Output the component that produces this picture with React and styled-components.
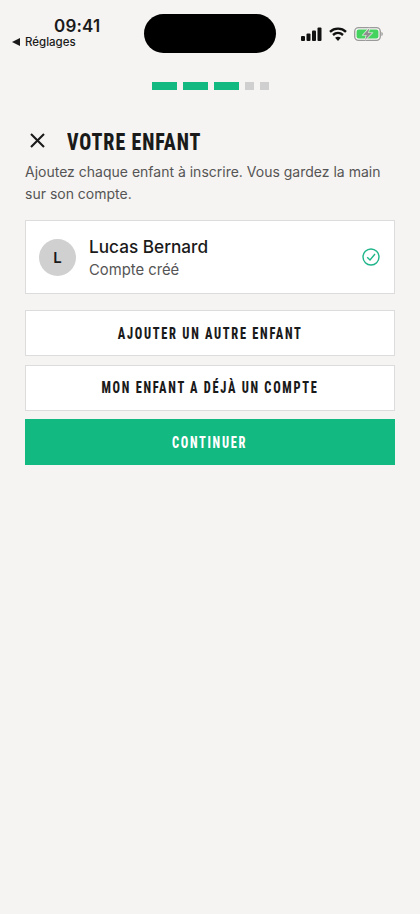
import React from "react";
import styled, { createGlobalStyle } from "styled-components";

const GlobalStyle = createGlobalStyle`
  html, body {
    margin: 0;
    padding: 0;
    background: #f5f4f2;
  }
`;

const Page = styled.div`
  width: 420px;
  height: 914px;
  overflow: hidden;
  background: #f5f4f2;
  font-family: "Inter", "Liberation Sans", sans-serif;
  color: #1a1a1a;
`;

const StatusBar = styled.div`
  display: grid;
  grid-template-columns: 144px 132px 1fr;
  height: 53px;
  padding-top: 14px;
  box-sizing: border-box;
`;

const StatusLeft = styled.div`
  display: flex;
  flex-direction: column;
  align-items: flex-start;
  padding-left: 12px;
`;

const Clock = styled.div`
  font-weight: 600;
  font-size: 17px;
  line-height: 20px;
  margin: 2px 0 0 42px;
  letter-spacing: 0.2px;
`;

const BackLink = styled.div`
  display: flex;
  align-items: center;
  gap: 3px;
  font-weight: 500;
  font-size: 11.5px;
  line-height: 14px;
  margin-top: -1px;
`;

const Island = styled.div`
  height: 39px;
  background: #000;
  border-radius: 20px;
`;

const StatusIcons = styled.div`
  display: flex;
  align-items: center;
  height: 40px;
  padding-left: 25px;
  gap: 7px;
`;

const Progress = styled.div`
  display: flex;
  justify-content: center;
  gap: 6px;
  margin-top: 29px;
`;

const Step = styled.div`
  height: 8px;
  width: ${(p) => (p.$done ? "25px" : "9px")};
  background: ${(p) => (p.$done ? "#12b981" : "#cfcfcf")};
`;

const Content = styled.div`
  display: flex;
  flex-direction: column;
  padding: 39px 25px 0;
`;

const Header = styled.div`
  display: flex;
  align-items: center;
  gap: 22px;
  height: 26px;
  padding-left: 5px;
`;

const CloseGlyph = styled.svg`
  flex: none;
  margin-top: -3px;
`;

const Title = styled.h1`
  margin: 0;
  font-family: "Roboto", sans-serif;
  font-stretch: 75%;
  font-weight: 800;
  font-size: 24px;
  letter-spacing: 1.1px;
  color: #1a1a1a;
  transform: scaleX(0.83);
  transform-origin: left center;
`;

const Intro = styled.p`
  margin: 6px 0 0;
  font-size: 14px;
  line-height: 22px;
  color: #555;
`;

const ChildCard = styled.div`
  display: flex;
  align-items: center;
  gap: 13px;
  height: 74px;
  box-sizing: border-box;
  margin-top: 15px;
  padding: 0 14px 0 13px;
  background: #fff;
  border: 1.5px solid #dcdcdc;
`;

const Avatar = styled.div`
  display: flex;
  align-items: center;
  justify-content: center;
  width: 37px;
  height: 37px;
  border-radius: 50%;
  background: #d0d0d0;
  font-weight: 600;
  font-size: 15px;
`;

const ChildInfo = styled.div`
  display: flex;
  flex: 1;
  flex-direction: column;
  gap: 1px;
`;

const ChildName = styled.div`
  font-weight: 500;
  font-size: 17.2px;
  line-height: 24px;
  color: #1a1a1a;
`;

const ChildStatus = styled.div`
  font-size: 14.8px;
  line-height: 20px;
  color: #555;
`;

const Actions = styled.div`
  display: flex;
  flex-direction: column;
  gap: 8.5px;
  margin-top: 16px;
`;

const Button = styled.button`
  height: 46px;
  box-sizing: border-box;
  padding: 0;
  border: ${(p) => (p.$primary ? "none" : "1.5px solid #dcdcdc")};
  border-radius: 0;
  background: ${(p) => (p.$primary ? "#12b981" : "#fff")};
  color: ${(p) => (p.$primary ? "#fff" : "#1a1a1a")};
  font-family: "Roboto", sans-serif;
  font-stretch: 75%;
  font-weight: 800;
  font-size: 16px;
  letter-spacing: 2.2px;
`;

const ButtonLabel = styled.span`
  display: inline-block;
  transform: scaleX(0.775);
`;

const App = () => (
  <Page>
    <GlobalStyle />
    <StatusBar>
      <StatusLeft>
        <Clock>09:41</Clock>
        <BackLink>
          <svg width="10" height="8" viewBox="0 0 10 8">
            <path d="M0 4 8 0v8z" fill="#1a1a1a" />
          </svg>
          Réglages
        </BackLink>
      </StatusLeft>
      <Island />
      <StatusIcons>
        <svg width="21" height="14" viewBox="0 0 21 14">
          <rect x="0" y="9" width="4" height="5" rx="1" fill="#111" />
          <rect x="5.5" y="6.5" width="4" height="7.5" rx="1" fill="#111" />
          <rect x="11" y="3.5" width="4" height="10.5" rx="1" fill="#111" />
          <rect x="16.5" y="0.5" width="4" height="13.5" rx="1" fill="#111" />
        </svg>
        <svg width="18" height="14" viewBox="0 0 18 14" fill="none" stroke="#111" strokeWidth="2.4">
          <path d="M1 4.8C5.5.6 12.5.6 17 4.8" />
          <path d="M4 8c3-2.7 7-2.7 10 0" />
          <path d="M9 14l-2.9-3.2c1.7-1.3 4.1-1.3 5.8 0z" fill="#111" stroke="none" />
        </svg>
        <svg width="29" height="14" viewBox="0 0 29 14">
          <rect x="0.7" y="0.7" width="25.6" height="12.6" rx="3.8" fill="none" stroke="#9a9a9a" strokeWidth="1.3" />
          <rect x="2.6" y="2.6" width="21.8" height="8.8" rx="2.2" fill="#45d35f" />
          <path d="M27.4 5v4c.9-.3 1.4-1 1.4-2s-.5-1.7-1.4-2z" fill="#9a9a9a" />
          <path
            d="M15.5 1 9 8h3.6l-1.6 5L18 6h-3.8z"
            fill="#8f8f8f"
            stroke="#f5f4f2"
            strokeWidth="1.2"
            paintOrder="stroke"
          />
        </svg>
      </StatusIcons>
    </StatusBar>

    <Progress>
      <Step $done />
      <Step $done />
      <Step $done />
      <Step />
      <Step />
    </Progress>

    <Content>
      <Header>
        <CloseGlyph width="15" height="15" viewBox="0 0 15 15" stroke="#1a1a1a" strokeWidth="2.1">
          <path d="M1 1l13 13M14 1 1 14" />
        </CloseGlyph>
        <Title>VOTRE ENFANT</Title>
      </Header>
      <Intro>Ajoutez chaque enfant à inscrire. Vous gardez la main sur son compte.</Intro>

      <ChildCard>
        <Avatar>L</Avatar>
        <ChildInfo>
          <ChildName>Lucas Bernard</ChildName>
          <ChildStatus>Compte créé</ChildStatus>
        </ChildInfo>
        <svg width="18" height="18" viewBox="0 0 18 18" fill="none" stroke="#1fb58a" strokeWidth="1.4">
          <circle cx="9" cy="9" r="8" />
          <path d="M5.2 9.3 8 12l5-6" />
        </svg>
      </ChildCard>

      <Actions>
        <Button><ButtonLabel>AJOUTER UN AUTRE ENFANT</ButtonLabel></Button>
        <Button><ButtonLabel>MON ENFANT A DÉJÀ UN COMPTE</ButtonLabel></Button>
        <Button $primary><ButtonLabel>CONTINUER</ButtonLabel></Button>
      </Actions>
    </Content>
  </Page>
);

export default App;
